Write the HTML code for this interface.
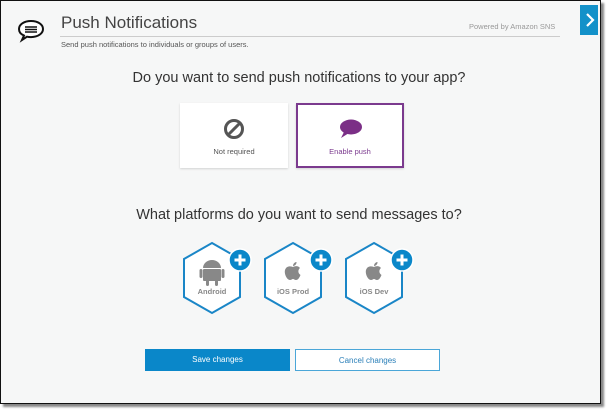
<!DOCTYPE html>
<html><head><style>
body{margin:0;width:610px;height:413px;background:#fff;position:relative;overflow:hidden;font-family:"Liberation Sans",sans-serif}
.frame{position:absolute;left:0;top:0;width:599px;height:402px;border:1px solid #111;background:#f6f7f7;box-shadow:3px 3px 2px #888}
.in{position:absolute;left:-1px;top:-1px;width:601px;height:404px}
.abs{position:absolute}
.card{position:absolute;top:103px;width:108px;height:65px;background:#fff;box-shadow:0 1px 2px rgba(0,0,0,.15);box-sizing:border-box;text-align:center;font-size:7.5px;color:#555}
.btn{position:absolute;top:349px;height:22px;width:145px;box-sizing:border-box;font-size:8px;text-align:center;line-height:22px}
.hexl{position:absolute;top:241px;width:62px;height:74px;font-size:7.5px;color:#888;font-weight:bold;text-align:center}
</style></head><body>
<div class="frame"><div class="in">
<svg class="abs" style="left:17px;top:19px" width="28" height="24" viewBox="0 0 28 24"><path d="M14 2C7 2 2 5.5 2 10c0 3 2 5.3 5 6.6L5 21l5-3.3c1.3.3 2.6.4 4 .4 7 0 12-3.6 12-8.1S21 2 14 2z" fill="#fff" stroke="#111" stroke-width="2"/><path d="M8 8h12M8 10.5h12M8 13h12" stroke="#111" stroke-width="1.6"/></svg>
<div class="abs" style="left:61px;top:13px;font-size:17px;color:#444">Push Notifications</div>
<div class="abs" style="left:60px;top:36px;width:500px;height:1px;background:#ccc"></div>
<div class="abs" style="left:61px;top:40px;font-size:7.5px;color:#555">Send push notifications to individuals or groups of users.</div>
<div class="abs" style="left:469px;top:22px;font-size:7.5px;color:#999">Powered by Amazon SNS</div>
<div class="abs" style="left:580px;top:5px;width:18px;height:30px;background:#1391c9"><svg width="18" height="30"><path d="M7 9l6 6-6 6" stroke="#fff" stroke-width="2.2" fill="none"/></svg></div>
<div class="abs" style="left:0;width:598px;top:70px;text-align:center;font-size:14.5px;color:#333">Do you want to send push notifications to your app?</div>
<div class="card" style="left:180px"><svg style="margin-top:15px" width="22" height="22" viewBox="0 0 22 22"><circle cx="11" cy="11" r="8.5" fill="none" stroke="#555" stroke-width="3"/><path d="M5 17L17 5" stroke="#555" stroke-width="3"/></svg><div style="margin-top:5px">Not required</div></div>
<div class="card" style="left:296px;border:2px solid #7b3a8e;color:#7b3a8e"><svg style="margin-top:13px" width="26" height="22" viewBox="0 0 26 22"><ellipse cx="14" cy="9" rx="11" ry="7.5" fill="#7b2f86"/><path d="M7 14L4 20l8-5z" fill="#7b2f86"/></svg><div style="margin-top:5px">Enable push</div></div>
<div class="abs" style="left:0;width:598px;top:207px;text-align:center;font-size:14.5px;color:#333">What platforms do you want to send messages to?</div>
<div class="hexl" style="left:181px"><svg class="abs" style="left:0;top:0" width="62" height="74"><polygon points="31,2 59,18 59,56 31,72 3,56 3,18" fill="#fff" stroke="#1a86c7" stroke-width="2"/><g fill="#888"><path d="M22 27a9 8 0 0 1 18 0z"/><rect x="22" y="28" width="18" height="12" rx="1"/><rect x="18.5" y="28" width="3" height="9" rx="1.5"/><rect x="40.5" y="28" width="3" height="9" rx="1.5"/><rect x="25" y="39" width="3" height="6" rx="1.5"/><rect x="34" y="39" width="3" height="6" rx="1.5"/></g></svg><div class="abs" style="left:0;width:62px;top:46px">Android</div></div>
<div class="hexl" style="left:262px"><svg class="abs" style="left:0;top:0" width="62" height="74"><polygon points="31,2 59,18 59,56 31,72 3,56 3,18" fill="#fff" stroke="#1a86c7" stroke-width="2"/><path d="M31 26c2-1 5-1.5 7 1-2 1.5-2.5 5 .5 7-1 2.5-2.5 5-4.5 5-1.5 0-2-1-3-1s-1.5 1-3 1c-3 0-6-6-5-10 1-3.5 4.5-4.5 8-3zM31 25c0-2.5 2-4 3.5-4 .2 2-1.5 4-3.5 4z" fill="#888"/></svg><div class="abs" style="left:0;width:62px;top:46px">iOS Prod</div></div>
<div class="hexl" style="left:343px"><svg class="abs" style="left:0;top:0" width="62" height="74"><polygon points="31,2 59,18 59,56 31,72 3,56 3,18" fill="#fff" stroke="#1a86c7" stroke-width="2"/><path d="M31 26c2-1 5-1.5 7 1-2 1.5-2.5 5 .5 7-1 2.5-2.5 5-4.5 5-1.5 0-2-1-3-1s-1.5 1-3 1c-3 0-6-6-5-10 1-3.5 4.5-4.5 8-3zM31 25c0-2.5 2-4 3.5-4 .2 2-1.5 4-3.5 4z" fill="#888"/></svg><div class="abs" style="left:0;width:62px;top:46px">iOS Dev</div></div>
<svg class="abs" style="left:228px;top:248px" width="26" height="26"><circle cx="12" cy="12" r="11" fill="#0a87c9" stroke="#fff" stroke-width="1.5"/><path d="M12 6.5v11M6.5 12h11" stroke="#fff" stroke-width="3"/></svg>
<svg class="abs" style="left:309px;top:248px" width="26" height="26"><circle cx="12" cy="12" r="11" fill="#0a87c9" stroke="#fff" stroke-width="1.5"/><path d="M12 6.5v11M6.5 12h11" stroke="#fff" stroke-width="3"/></svg>
<svg class="abs" style="left:390px;top:248px" width="26" height="26"><circle cx="12" cy="12" r="11" fill="#0a87c9" stroke="#fff" stroke-width="1.5"/><path d="M12 6.5v11M6.5 12h11" stroke="#fff" stroke-width="3"/></svg>
<div class="btn" style="left:145px;background:#0a87c9;color:#fff">Save changes</div>
<div class="btn" style="left:295px;background:#fff;border:1px solid #4aa6d8;color:#2a7fb8">Cancel changes</div>
</div></div>
</body></html>
